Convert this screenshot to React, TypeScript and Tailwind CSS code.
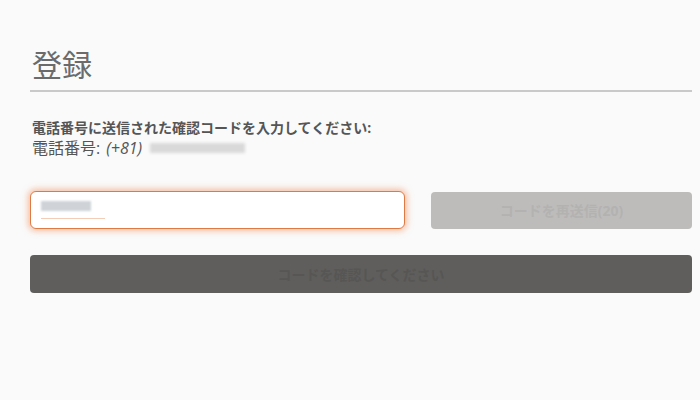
export default function App() {
  return (
    <div
      className="min-h-[400px] w-[700px] bg-[#fafafa] pl-[30px] pr-[8px] pt-[45px]"
      style={{ fontFamily: '"Open Sans", "Noto Sans CJK JP", sans-serif' }}
    >
      <h1 className="border-b-2 border-[#c9c9c9] pb-[5px] pl-[2px] text-[30px] leading-[40px] font-normal text-[#6b6b6b]">
        登録
      </h1>

      <div className="mt-[26px] pl-[2px] text-[#555]">
        <p className="text-[14px] leading-[20px] font-bold">電話番号に送信された確認コードを入力してください:</p>
        <p className="flex items-center text-[16px] leading-[20px]">
          電話番号: <span className="ml-[6px] italic">(+81)</span>
          <span className="ml-[8px] inline-block h-[10px] w-[95px] bg-[#d9d9d9] blur-[1.5px]" />
        </p>
      </div>

      <div className="mt-[33px] flex items-center gap-[26px]">
        <div className="flex h-[38px] w-[375px] items-center rounded-[6px] border border-[#e07a45] bg-white px-[10px] shadow-[0_0_6px_2px_rgba(240,140,90,0.55)]">
          <div className="flex flex-col">
            <span className="h-[10px] w-[50px] bg-[#cfd3d7] blur-[1px]" />
            <span className="mt-[7px] h-[1px] w-[64px] bg-[#f3cdb8]" />
          </div>
        </div>
        <button className="h-[37px] flex-1 rounded-[4px] bg-[#bdbcbb] text-[14px] font-bold text-[#b3b2b1]">
          コードを再送信(20)
        </button>
      </div>

      <button className="mt-[26px] h-[38px] w-full rounded-[4px] bg-[#5f5e5c] text-[14px] font-bold text-[#575654]">
        コードを確認してください
      </button>
    </div>
  );
}
